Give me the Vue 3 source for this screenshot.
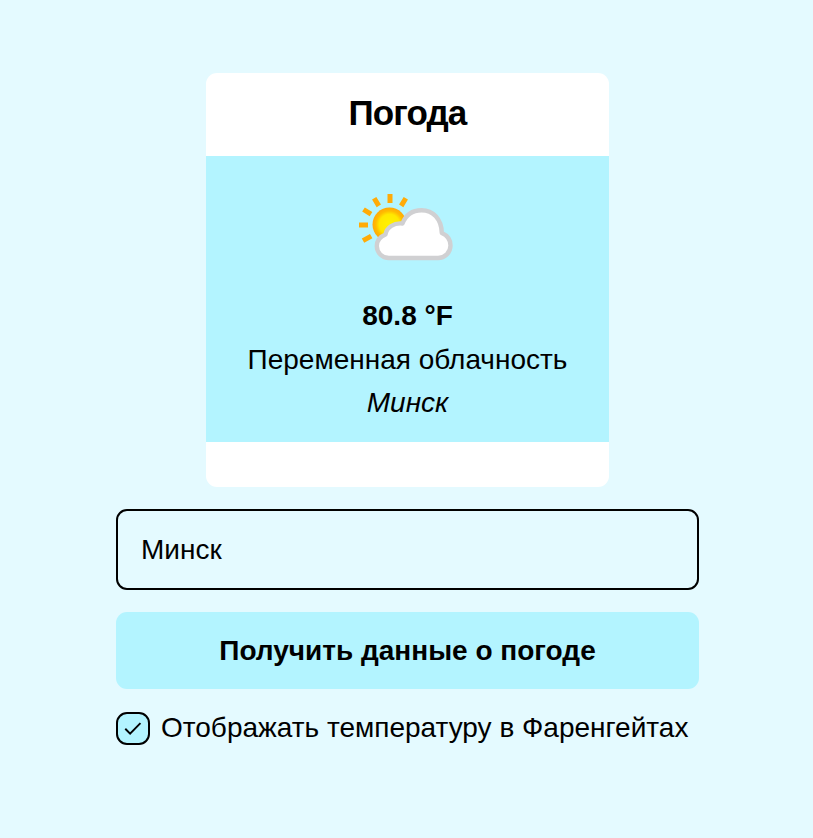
<script setup>
import { ref } from 'vue'

const city = ref('Минск')
const fahrenheit = ref(true)
</script>

<template>
  <main class="page">
    <section class="card">
      <h1 class="card-title">Погода</h1>
      <div class="card-body">
        <svg class="weather-icon" viewBox="3 0 130 95" aria-hidden="true">
          <defs>
            <radialGradient id="sun" cx="50%" cy="50%" r="50%">
              <stop offset="0" stop-color="#fff200" />
              <stop offset="0.6" stop-color="#ffe800" />
              <stop offset="0.8" stop-color="#ffbc00" />
              <stop offset="1" stop-color="#ffa80a" />
            </radialGradient>
          </defs>
          <g stroke="#ffab08" stroke-width="5">
            <path d="M50 14v9M34.2 18.3l4.6 7.6M65.8 18.3l-4.6 7.6M23.5 29.5l7.5 4.7M19 45h9M23 60.6l8.2-4.5" />
          </g>
          <circle cx="49.5" cy="44.5" r="17" fill="url(#sun)" />
          <path
            d="M49 78C42 78 36.8 72.5 36.8 66C36.8 60.5 40.5 56.5 45.5 54.5C46.500 47.500 54 42.500 62.500 43.500C65.500 35.500 72 30.200 81.500 30.200C93 30.200 101.500 39 101.800 53C107.500 55.500 110.500 59.800 110.500 65.500C110.500 72.500 105 78 98 78Z"
            fill="#fff"
            stroke="#d0d0d2"
            stroke-width="4.4"
            stroke-linejoin="round"
          />
        </svg>
        <p class="line"><b>80.8 °F</b></p>
        <p class="line">Переменная облачность</p>
        <p class="line"><i>Минск</i></p>
      </div>
    </section>
    <form class="form" @submit.prevent>
      <input v-model="city" class="field" type="text" />
      <button class="submit" type="submit">Получить данные о погоде</button>
      <label class="option">
        <input v-model="fahrenheit" class="native-check" type="checkbox" />
        <span class="check">
          <svg v-if="fahrenheit" viewBox="0 0 30 30" aria-hidden="true">
            <path d="M7 15.3l5 5 10.7-10.8" />
          </svg>
        </span>
        <span class="option-text">Отображать температуру в Фаренгейтах</span>
      </label>
    </form>
  </main>
</template>

<style>
body {
  background: #e4faff;
}
</style>

<style scoped>
* {
  box-sizing: border-box;
}

.page {
  display: flex;
  flex-direction: column;
  align-items: center;
  gap: 22px;
  min-height: 838px;
  padding: 73px 0 0 2px;
  font-family: "Liberation Sans", Arial, sans-serif;
  font-size: 28px;
  color: #000;
}

.card {
  width: 403px;
  padding-bottom: 45px;
  overflow: hidden;
  border-radius: 11px;
  background: #fff;
}

.card-title {
  height: 83px;
  margin: 0;
  font-size: 35px;
  line-height: 79px;
  letter-spacing: -0.9px;
  text-align: center;
}

.card-body {
  display: flex;
  flex-direction: column;
  align-items: center;
  height: 286px;
  padding-top: 24px;
  background: #b3f4ff;
}

.weather-icon {
  flex: none;
  width: 130px;
  height: 95px;
  margin-bottom: 19px;
  filter: blur(0.5px);
}

.line {
  margin: 0;
  line-height: 43.5px;
  white-space: nowrap;
}

.form {
  display: flex;
  flex-direction: column;
  width: 583px;
}

.field {
  height: 81px;
  margin: 0 0 22px;
  padding: 0 23px;
  border: 2px solid #000;
  border-radius: 11px;
  outline: none;
  background: transparent;
  font: inherit;
  color: inherit;
}

.submit {
  height: 77px;
  margin: 0 0 23px;
  padding: 0;
  border: 0;
  border-radius: 11px;
  background: #b3f4ff;
  font: inherit;
  font-weight: 700;
  color: inherit;
}

.option {
  display: flex;
  align-items: center;
  gap: 11px;
  height: 33px;
  white-space: nowrap;
}

.option-text {
  padding-bottom: 2px;
}

.native-check {
  position: absolute;
  opacity: 0;
  pointer-events: none;
}

.check {
  flex: none;
  width: 34px;
  height: 33px;
  border: 2px solid #000;
  border-radius: 11px;
  background: #b3f4ff;
}

.check svg {
  display: block;
  width: 30px;
  height: 29px;
  fill: none;
  stroke: #000;
  stroke-width: 2;
}
</style>
